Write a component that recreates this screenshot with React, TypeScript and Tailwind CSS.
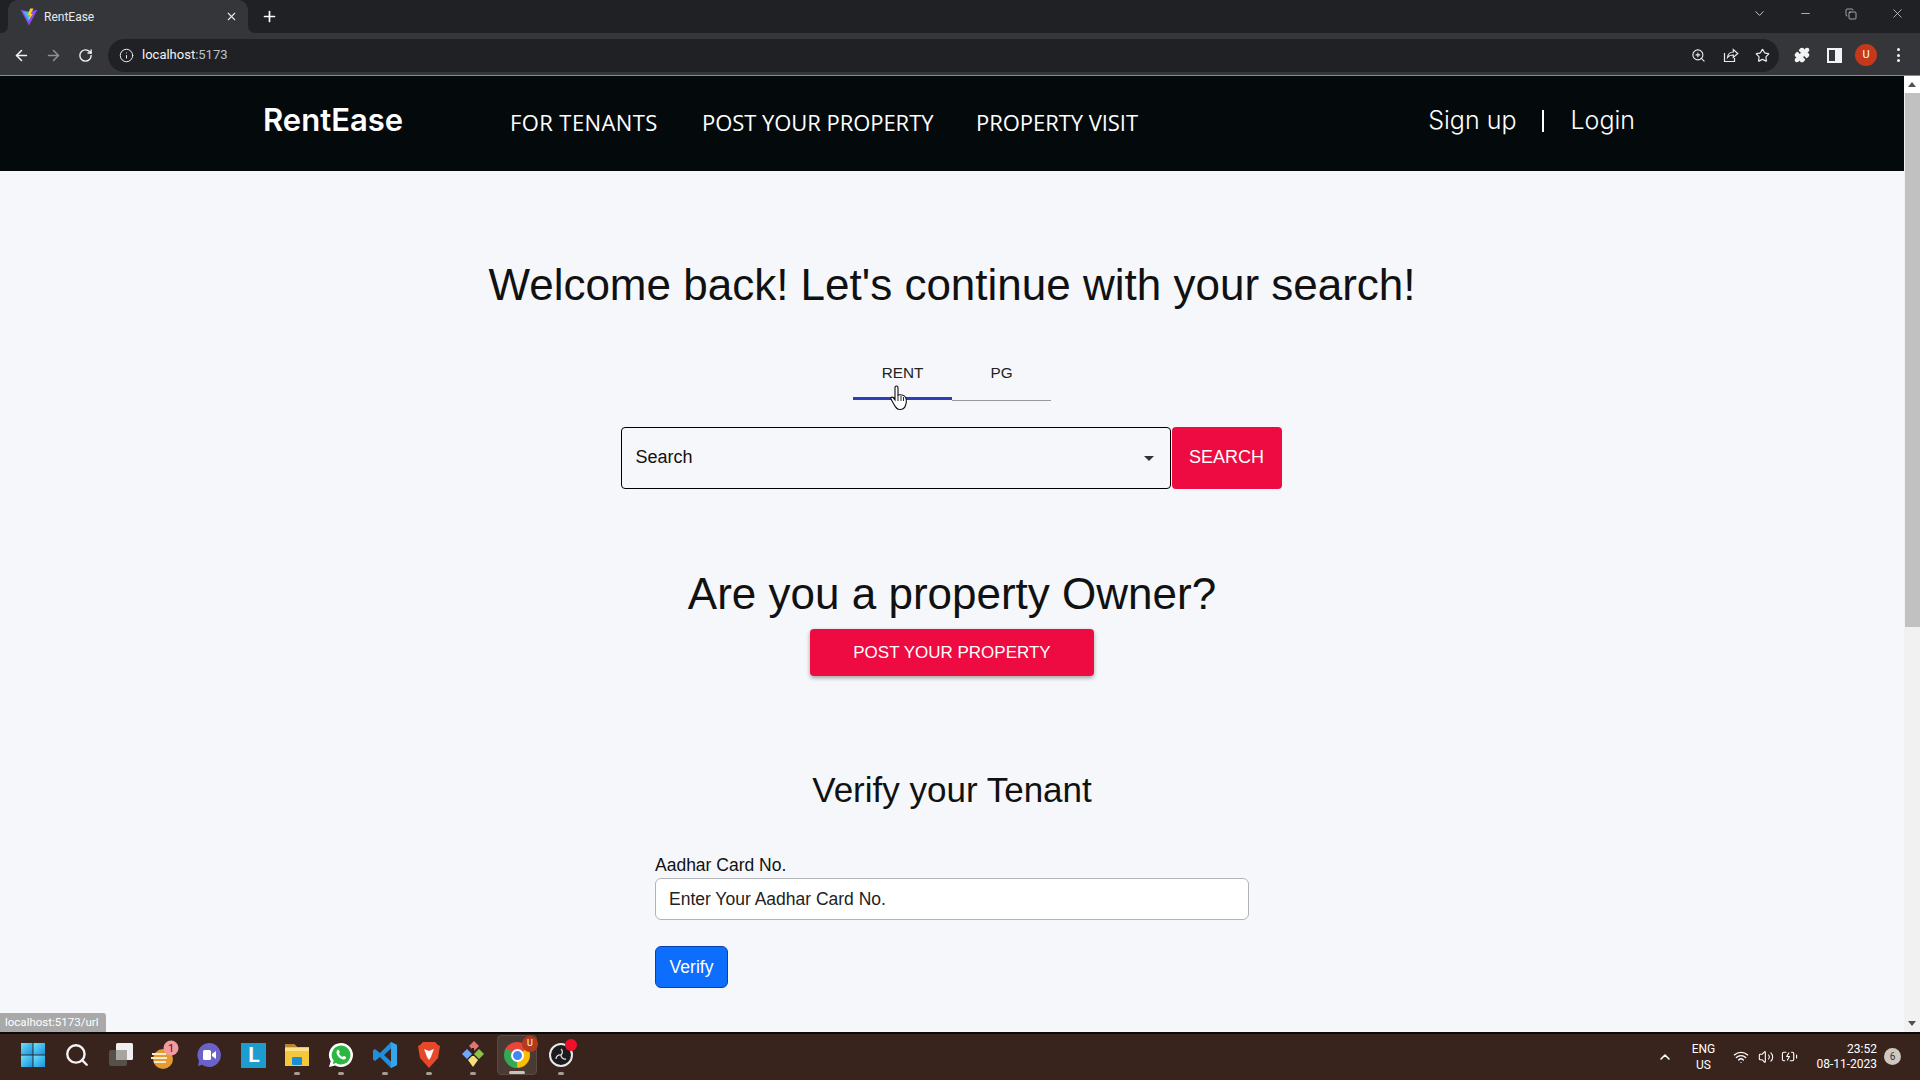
import React from "react";
import { ArrowLeft, ArrowRight, RotateCw, Info, ZoomIn, Star, Puzzle, X, Plus, ChevronDown, Minus, Copy, ChevronUp, Wifi, Volume2, BatteryCharging, Search as SearchIcon } from "lucide-react";

const sans = "font-['Liberation_Sans',Arial,sans-serif]";

function Vite({ size = 18 }: { size?: number }) {
  return (
    <svg width={size} height={size} viewBox="0 0 16 16">
      <path d="M0.500 1.500 L8 3 L15.500 1.500 L8 15.500 Z" fill="#8a4cf0" />
      <path d="M2.500 3 L8 3.500 L8 12 Z" fill="#3fb8e8" />
      <path d="M9 0.500 L12 0.500 L9.500 5 L11.500 5 L7.500 11 L8.500 6.500 L6.800 6.500 Z" fill="#ffd028" />
    </svg>
  );
}

function TabStrip() {
  return (
    <div className="h-[33px] bg-[#202124] flex items-end shrink-0 pl-[8px] relative">
      <div className="relative w-[240px] h-[33px] bg-[#35363a] rounded-t-[10px] flex items-center pl-[12px] pr-[10px]">
        <svg className="absolute -left-[8px] bottom-0" width="8" height="8" viewBox="0 0 8 8"><path d="M0 8 Q8 8 8 0 V8 Z" fill="#35363a" /></svg>
        <svg className="absolute -right-[8px] bottom-0" width="8" height="8" viewBox="0 0 8 8"><path d="M8 8 Q0 8 0 0 V8 Z" fill="#35363a" /></svg>
        <Vite />
        <span className="ml-[6px] text-[12px] text-[#e8eaed] font-['Roboto',sans-serif] flex-1">RentEase</span>
        <X size={13} color="#e8eaed" strokeWidth={2} />
      </div>
      <div className="w-[30px] h-[33px] flex items-center justify-center ml-[6px]">
        <Plus size={17} color="#ffffff" strokeWidth={2.400} />
      </div>
      <div className="flex-1" />
      <div className="h-[33px] flex items-center pb-[6px] text-[#e8eaed]">
        <ChevronDown size={15} strokeWidth={1.300} />
        <div className="w-[46px] ml-[15px] flex justify-center"><Minus size={13} strokeWidth={1.300} /></div>
        <div className="w-[46px] flex justify-center"><Copy size={12} strokeWidth={1.300} /></div>
        <div className="w-[46px] flex justify-center"><X size={15} strokeWidth={1.100} /></div>
      </div>
    </div>
  );
}

function Toolbar() {
  return (
    <div className="h-[43px] bg-[#35363a] border-b border-b-[#8a8b8e] flex items-center shrink-0 pl-[13px] pt-[2px]">
      <ArrowLeft size={17} color="#f1f3f4" strokeWidth={2.200} />
      <ArrowRight size={17} color="#8f9093" strokeWidth={2.200} className="ml-[15px]" />
      <RotateCw size={15} color="#f1f3f4" strokeWidth={2.200} className="ml-[16px]" />
      <div className="ml-[15px] h-[33px] w-[1671px] rounded-full bg-[#202124] flex items-center pl-[11px] pr-[9px]">
        <Info size={15} color="#e8eaed" strokeWidth={1.600} />
        <span className="ml-[8px] text-[13px] font-['Roboto',sans-serif] text-[#bdc1c6]"><span className="text-[#f1f3f4]">localhost</span>:5173</span>
        <div className="flex-1" />
        <ZoomIn size={15} color="#e8eaed" strokeWidth={1.800} />
        <svg className="ml-[17px]" width="16" height="16" viewBox="0 0 16 16" fill="none" stroke="#e8eaed" strokeWidth="1.200">
          <path d="M1.500 6v8.500h10V11" />
          <path d="M4.500 10.500c.3-3.500 3-5.500 5.800-5.500V2.500l4.500 4-4.500 4V8c-2.500 0-4.500.7-5.800 2.500z" />
        </svg>
        <Star size={15} color="#e8eaed" strokeWidth={1.900} className="ml-[16px]" />
      </div>
      <Puzzle size={16} color="#f1f3f4" fill="#f1f3f4" className="ml-[15px]" />
      <div className="ml-[17px] w-[15px] h-[15px] border-[2px] border-[#f1f3f4] border-r-[7px]" />
      <div className="ml-[13px] w-[22px] h-[22px] rounded-full bg-[#c5391a] flex items-center justify-center text-[11px] text-white font-['Roboto',sans-serif]">U</div>
      <div className="ml-[20px] flex flex-col gap-[2.500px]">
        <span className="w-[3px] h-[3px] rounded-full bg-[#f1f3f4]" />
        <span className="w-[3px] h-[3px] rounded-full bg-[#f1f3f4]" />
        <span className="w-[3px] h-[3px] rounded-full bg-[#f1f3f4]" />
      </div>
    </div>
  );
}

function Nav() {
  return (
    <div className="h-[95px] bg-[#040a0c] flex items-center text-white shrink-0 pl-[263px]">
      <span className="font-['Inter',sans-serif] font-semibold text-[31px] w-[247px] -mt-[6px]">RentEase</span>
      <div className="flex items-center font-['Open_Sans',sans-serif] text-[22px] -mt-[2px]">
        <span className="w-[192px] whitespace-nowrap tracking-[0.4px]">FOR TENANTS</span>
        <span className="w-[274px] whitespace-nowrap tracking-[-0.05px]">POST YOUR PROPERTY</span>
        <span className="whitespace-nowrap tracking-[-0.05px]">PROPERTY VISIT</span>
      </div>
      <div className="flex-1" />
      <div className="flex items-center font-['Inter',sans-serif] text-[25px] font-light pr-[269px] -mt-[6px]">
        <span>Sign up</span>
        <span className="mx-[26px] w-[2px] h-[22px] bg-white" />
        <span>Login</span>
      </div>
    </div>
  );
}

function Main() {
  return (
    <div className={`flex-1 bg-[#f5f7fa] flex flex-col items-center text-black ${sans}`}>
      <h1 className="mt-[84px] text-[44px] leading-[60px] text-[#111] whitespace-nowrap">Welcome back! Let's continue with your search!</h1>
      <div className="mt-[41px] flex text-[15.300px] items-start">
        <div className="w-[99px] h-[44px] flex justify-center pt-[6px] text-[#222] border-b-[3px] border-b-[#2a3fb8]">RENT</div>
        <div className="w-[99px] h-[45px] flex justify-center pt-[6px] text-[#222] border-b border-b-[#9a9a9a]">PG</div>
      </div>
      <div className="mt-[26px] flex h-[62px] mr-[2px]">
        <div className="w-[550px] h-full border border-black rounded-[4px] flex items-center pl-[14px] pr-[16px] text-[18px] text-[#111]">
          <span className="flex-1 -mt-[2px]">Search</span>
          <span className="w-0 h-0 border-x-[5px] border-x-transparent border-t-[5px] border-t-[#333]" />
        </div>
        <div className="ml-px w-[110px] h-full bg-[#ed0b42] rounded-[4px] text-white text-[18px] flex items-center justify-center pb-[2px]">SEARCH</div>
      </div>
      <h2 className="mt-[77px] text-[44px] leading-[56px] text-[#111] whitespace-nowrap">Are you a property Owner?</h2>
      <div className="mt-[7px] w-[284px] h-[47px] bg-[#ed0b42] rounded-[4px] text-white text-[17px] flex items-center justify-center shadow-[0_2px_4px_rgba(0,0,0,0.35)]">POST YOUR PROPERTY</div>
      <h3 className="mt-[90px] text-[35px] leading-[48px] text-[#111] whitespace-nowrap">Verify your Tenant</h3>
      <div className="mt-[38px] w-[594px] flex flex-col items-start">
        <label className="text-[17.500px] leading-[26px] text-[#111]">Aadhar Card No.</label>
        <div className="w-full h-[42px] bg-white border border-[#b0b3b8] rounded-[6px] flex items-center pl-[13px] text-[17.500px] text-[#222]">Enter Your Aadhar Card No.</div>
        <div className="mt-[26px] w-[73px] h-[42px] bg-[#0d6efd] border border-[#0a3fb0] rounded-[6px] text-white text-[17.500px] flex items-center justify-center">Verify</div>
      </div>
    </div>
  );
}

function Scrollbar() {
  return (
    <div className="w-[16px] bg-[#f1f1f1] flex flex-col items-center shrink-0">
      <div className="h-[17px] flex items-center justify-center w-full bg-white">
        <span className="w-0 h-0 border-x-[4px] border-x-transparent border-b-[5px] border-b-[#505050]" />
      </div>
      <div className="w-full h-[534px] bg-[#c1c1c1] ml-[2px]" />
      <div className="flex-1" />
      <div className="h-[17px] flex items-center justify-center w-full">
        <span className="w-0 h-0 border-x-[4px] border-x-transparent border-t-[5px] border-t-[#505050]" />
      </div>
    </div>
  );
}

function Slot({ children, dot, active }: { children: React.ReactNode; dot?: boolean; active?: boolean }) {
  return (
    <div className={`relative w-[40px] h-[40px] mr-[4px] flex items-center justify-center rounded-[4px] ${active ? "bg-[#4a3a33] border border-[#5a4a42]" : ""}`}>
      {children}
      {dot && <span className={`absolute bottom-0 h-[3px] rounded-full ${active ? "w-[16px] bg-[#c9c2bd]" : "w-[6px] bg-[#a59d98]"}`} />}
    </div>
  );
}

function Taskbar() {
  return (
    <div className="h-[48px] bg-[#38241d] border-t-[2px] border-t-[#0c0a08] flex items-center shrink-0 pl-[13px] pb-[4px] font-['Roboto',sans-serif] text-white">
      <Slot>
        <svg width="24" height="24" viewBox="0 0 24 24">
          <defs>
            <linearGradient id="win" x1="0" y1="0" x2="1" y2="1"><stop offset="0" stopColor="#6fe0f8" /><stop offset="1" stopColor="#1592e0" /></linearGradient>
          </defs>
          <rect x="0" y="0" width="11.500" height="11.500" fill="url(#win)" /><rect x="12.500" y="0" width="11.500" height="11.500" fill="url(#win)" />
          <rect x="0" y="12.500" width="11.500" height="11.500" fill="url(#win)" /><rect x="12.500" y="12.500" width="11.500" height="11.500" fill="url(#win)" />
        </svg>
      </Slot>
      <Slot><SearchIcon size={26} color="#f3f3f3" strokeWidth={2.200} /></Slot>
      <Slot>
        <svg width="26" height="26" viewBox="0 0 26 26">
          <rect x="1" y="8" width="18" height="16" rx="2" fill="#55504c" /><rect x="8" y="1" width="17" height="17" rx="1.500" fill="#f0f0f0" /><rect x="8" y="8" width="11" height="10" fill="#a8a4a0" />
        </svg>
      </Slot>
      <Slot>
        <svg width="30" height="30" viewBox="0 0 30 30">
          <circle cx="13" cy="19" r="10" fill="#e59a32" />
          <path d="M2 14h14M1 18h16M4 22h12" stroke="#f7e8d0" strokeWidth="2" />
          <circle cx="21" cy="8" r="7.500" fill="#f39aa0" />
          <text x="21" y="12" fontSize="11" textAnchor="middle" fill="#40201a">1</text>
        </svg>
      </Slot>
      <Slot>
        <svg width="26" height="26" viewBox="0 0 26 26">
          <path d="M13 1a12 12 0 1 1-7 21.800L2 24l1-5A12 12 0 0 1 13 1z" fill="#6a62c8" />
          <rect x="7" y="8" width="8" height="10" rx="1.500" fill="#fff" /><path d="M16 12l4-3v8l-4-3z" fill="#fff" />
        </svg>
      </Slot>
      <Slot>
        <div className="w-[25px] h-[25px] bg-[#1c9ccf] flex items-center justify-center text-[21px] font-bold leading-none pl-[2px]">L</div>
      </Slot>
      <Slot dot>
        <svg width="26" height="26" viewBox="0 0 26 26">
          <path d="M1 2h9l3 3h12v19H1z" fill="#f5c83c" /><path d="M1 2h9l3 3H1z" fill="#b8862a" /><rect x="1" y="6" width="24" height="3" fill="#fce28a" />
          <rect x="8" y="15" width="10" height="8" rx="1" fill="#1a8fd8" />
        </svg>
      </Slot>
      <Slot dot>
        <svg width="26" height="26" viewBox="0 0 26 26">
          <path d="M13 1a12 12 0 1 1-6 22.400L1 25l1.700-5.800A12 12 0 0 1 13 1z" fill="#fff" />
          <path d="M13 3.500a9.500 9.500 0 1 1-5 17.600l-3.300.9 1-3.200A9.500 9.500 0 0 1 13 3.500z" fill="#2bb741" />
          <path d="M9.500 8c1-.8 1.600.2 2.200 1.700.3.8-.7 1.300-.7 1.800.5 1.400 2 2.800 3.500 3.400.6-.2 1-1.200 1.700-.8 1.600.8 2.400 1.200 1.600 2.400-1.200 1.600-3.400 1.200-6-.5-2.700-2-4.400-5.800-2.300-7.900z" fill="#fff" />
        </svg>
      </Slot>
      <Slot dot>
        <svg width="26" height="28" viewBox="0 0 26 28">
          <path d="M19 1l6 3v20l-6 3L8 16l-5 4-2-1.500V9.500L3 8l5 4z" fill="#1f8fdc" />
          <path d="M19 7.500L12 14l7 6.500z" fill="#38241d" />
          <path d="M19 1l6 3v20l-6 3z" fill="#33a6ee" />
        </svg>
      </Slot>
      <Slot dot>
        <svg width="24" height="28" viewBox="0 0 24 28">
          <path d="M6 1h12l3 3 2 1-2 12-9 10-9-10L1 5l2-1z" fill="#e8482a" />
          <path d="M7 8l5 2 5-2-2 5-1 3-2 3-2-3-1-3z" fill="#fff" />
        </svg>
      </Slot>
      <Slot dot>
        <svg width="26" height="30" viewBox="0 0 26 30">
          <path d="M14 1l5 5-5 5-5-5z" fill="#e57373" /><path d="M7 9l5 5-5 5-5-5z" fill="#6fa8ff" /><path d="M19 9l5 5-5 5-5-5z" fill="#8bc34a" />
          <path d="M13 15l5 5-5 7-5-7z" fill="#f5e27e" /><path d="M13 8v8" stroke="#222" strokeWidth="2" />
        </svg>
      </Slot>
      <Slot dot active>
        <div className="relative w-[26px] h-[26px]">
          <div className="w-[26px] h-[26px] rounded-full [background:conic-gradient(from_-60deg,#e8453c_0_33%,#fbbc05_33%_66%,#34a853_66%_100%)] flex items-center justify-center">
            <div className="w-[13px] h-[13px] rounded-full bg-[#4285f4] border-[2px] border-white" />
          </div>
          <div className="absolute -top-[6px] -right-[8px] w-[16px] h-[16px] rounded-full bg-[#b53a1c] text-[9px] flex items-center justify-center">U</div>
        </div>
      </Slot>
      <Slot dot>
        <div className="relative w-[24px] h-[24px] rounded-full bg-[#1b1b1e] border-[2px] border-[#e8e8e8] flex items-center justify-center">
          <svg width="14" height="14" viewBox="0 0 14 14" fill="none" stroke="#ddd" strokeWidth="1.300"><path d="M7 1a4 4 0 0 1 0 6M2 11a4 4 0 0 1 5-4M12 11a4 4 0 0 1-5-4" /></svg>
          <div className="absolute -top-[6px] -right-[6px] w-[12px] h-[12px] rounded-full bg-[#f0102a]" />
        </div>
      </Slot>
      <div className="flex-1" />
      <div className="flex items-center mt-[3px]">
        <ChevronUp size={16} strokeWidth={2.400} />
        <div className="ml-[17px] w-[26px] flex flex-col items-center text-[12px] leading-[16px]"><span>ENG</span><span>US</span></div>
        <Wifi size={16} strokeWidth={2} className="ml-[17px]" />
        <Volume2 size={16} strokeWidth={1.600} className="ml-[9px]" />
        <BatteryCharging size={17} strokeWidth={1.600} className="ml-[7px]" />
        <div className="ml-[18px] flex flex-col items-end text-[12px] leading-[15px]"><span>23:52</span><span>08-11-2023</span></div>
        <div className="ml-[7px] mr-[19px] w-[17px] h-[17px] rounded-full bg-[#cfc8c0] text-[#333] text-[10px] flex items-center justify-center">6</div>
      </div>
    </div>
  );
}

export default function App() {
  return (
    <div className="w-[1920px] h-[1080px] flex flex-col overflow-hidden">
      <TabStrip />
      <Toolbar />
      <div className="flex-1 flex relative min-h-0">
        <div className="flex-1 flex flex-col min-w-0">
          <Nav />
          <Main />
        </div>
        <Scrollbar />
        <div className="absolute left-0 bottom-0 h-[19px] w-[106px] bg-[#a9a9a9] rounded-tr-[3px] text-[11.500px] text-white flex items-center pl-[5px] font-['Roboto',sans-serif]">localhost:5173/url</div>
        <svg className="absolute left-[890px] top-[309px]" width="18" height="26" viewBox="0 0 18 26">
          <path d="M5 2c1-1.500 3-1.500 3 1v7c2-.5 6 0 7 1.500 1.500 2 1.500 6 .5 9-1 3-3 4-5.500 4-3 0-4-1.500-6-5L1 14c-.5-1.500 1-2.500 2-1.500L5 15z" fill="#fff" stroke="#111" strokeWidth="1.100" />
          <path d="M8 10v6M11 11v5M13.500 12v4" stroke="#111" strokeWidth="0.900" />
        </svg>
      </div>
      <Taskbar />
    </div>
  );
}
